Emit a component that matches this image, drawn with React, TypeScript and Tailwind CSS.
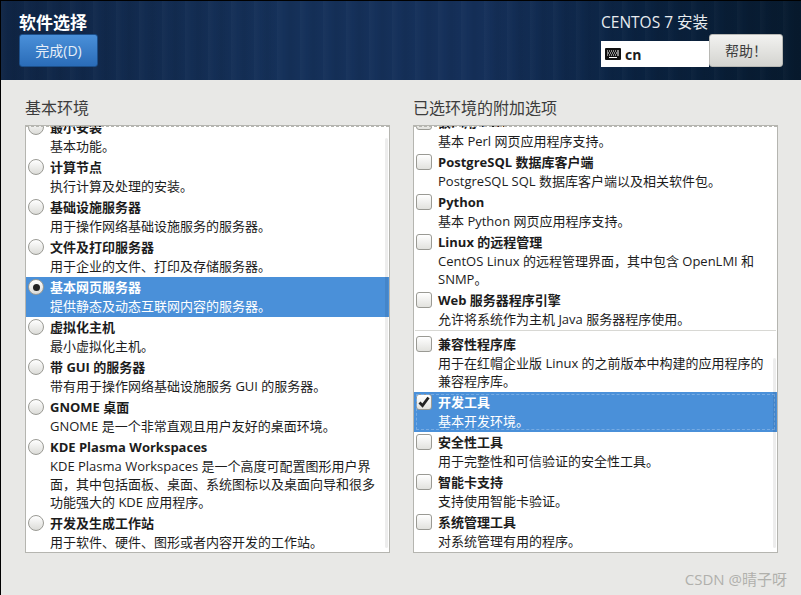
import { ReactNode } from "react";

interface Option {
  title: string;
  lines: string[];
  selected?: boolean;
}

const ENVIRONMENTS: Option[] = [
  { title: "最小安装", lines: ["基本功能。"] },
  { title: "计算节点", lines: ["执行计算及处理的安装。"] },
  { title: "基础设施服务器", lines: ["用于操作网络基础设施服务的服务器。"] },
  { title: "文件及打印服务器", lines: ["用于企业的文件、打印及存储服务器。"] },
  { title: "基本网页服务器", lines: ["提供静态及动态互联网内容的服务器。"], selected: true },
  { title: "虚拟化主机", lines: ["最小虚拟化主机。"] },
  { title: "带 GUI 的服务器", lines: ["带有用于操作网络基础设施服务 GUI 的服务器。"] },
  { title: "GNOME 桌面", lines: ["GNOME 是一个非常直观且用户友好的桌面环境。"] },
  {
    title: "KDE Plasma Workspaces",
    lines: [
      "KDE Plasma Workspaces 是一个高度可配置图形用户界",
      "面，其中包括面板、桌面、系统图标以及桌面向导和很多",
      "功能强大的 KDE 应用程序。",
    ],
  },
  { title: "开发及生成工作站", lines: ["用于软件、硬件、图形或者内容开发的工作站。"] },
];

const ADDONS_TOP: Option[] = [
  { title: "嵌入用 Perl", lines: ["基本 Perl 网页应用程序支持。"] },
  { title: "PostgreSQL 数据库客户端", lines: ["PostgreSQL SQL 数据库客户端以及相关软件包。"] },
  { title: "Python", lines: ["基本 Python 网页应用程序支持。"] },
  {
    title: "Linux 的远程管理",
    lines: ["CentOS Linux 的远程管理界面，其中包含 OpenLMI 和", "SNMP。"],
  },
  { title: "Web 服务器程序引擎", lines: ["允许将系统作为主机 Java 服务器程序使用。"] },
];

const ADDONS_BOTTOM: Option[] = [
  {
    title: "兼容性程序库",
    lines: ["用于在红帽企业版 Linux 的之前版本中构建的应用程序的", "兼容程序库。"],
  },
  { title: "开发工具", lines: ["基本开发环境。"], selected: true },
  { title: "安全性工具", lines: ["用于完整性和可信验证的安全性工具。"] },
  { title: "智能卡支持", lines: ["支持使用智能卡验证。"] },
  { title: "系统管理工具", lines: ["对系统管理有用的程序。"] },
];

function Radio({ checked }: { checked?: boolean }) {
  return (
    <span className="flex h-4 w-4 shrink-0 items-center justify-center rounded-full border border-[#9a9a94] bg-gradient-to-b from-[#ffffff] to-[#dcdcd8]">
      {checked ? <span className="h-[7px] w-[7px] rounded-full bg-[#222222]" /> : null}
    </span>
  );
}

function Checkbox({ checked }: { checked?: boolean }) {
  return (
    <span className="flex h-4 w-4 shrink-0 items-center justify-center rounded-[3px] border border-[#9a9a94] bg-gradient-to-b from-[#ffffff] to-[#e2e2de]">
      {checked ? (
        <svg viewBox="0 0 14 14" className="h-[14px] w-[14px]">
          <path d="M2.5 7.500 L5.500 10.500 L11.500 2.500" fill="none" stroke="#222222" strokeWidth="2.8" />
        </svg>
      ) : null}
    </span>
  );
}

function Row({ option, mark, focused }: { option: Option; mark: ReactNode; focused?: boolean }) {
  return (
    <div
      className={`relative flex pl-[2px] ${
        option.selected ? "bg-[#4a90d9] text-white" : "text-[#1c1c1c]"
      }`}
    >
      {focused ? (
        <div className="absolute inset-[2px] border border-dashed border-[#76abe3]" />
      ) : null}
      <div className="flex h-5 w-[22px] shrink-0 items-center">{mark}</div>
      <div className="relative min-w-0 pb-[2px]">
        <div className="h-5 whitespace-nowrap text-[13px] font-bold leading-5">{option.title}</div>
        {option.lines.map((line) => (
          <div key={line} className="h-[18px] whitespace-nowrap text-[13px] leading-[18px]">
            {line}
          </div>
        ))}
      </div>
    </div>
  );
}

function Panel({
  children,
  scrollTop,
  thumb,
}: {
  children: ReactNode;
  scrollTop: string;
  thumb: string;
}) {
  return (
    <div className="relative h-[428px] w-[365px] overflow-hidden border border-[#b5b5b0] bg-white">
      <div className={scrollTop}>{children}</div>
      <div className="absolute left-0 right-0 top-0 border-t border-dashed border-[#b5b5b0]" />
      <div className={`absolute bottom-1 right-[1px] w-[3px] rounded-full bg-black/[0.07] ${thumb}`} />
    </div>
  );
}

export default function App() {
  return (
    <div className="flex h-[595px] w-[801px] flex-col overflow-hidden border-l border-t border-black bg-[#e8e8e6] font-['Open_Sans','Noto_Sans_CJK_SC',sans-serif]">
      <header className="flex h-[79px] shrink-0 justify-between bg-[repeating-linear-gradient(90deg,rgba(255,255,255,0.025)_0px,rgba(255,255,255,0)_7px,rgba(0,0,0,0.05)_13px,rgba(255,255,255,0)_23px),linear-gradient(90deg,#0f2545_0%,#15315a_35%,#15305a_60%,#0a2240_80%,#071a2e_100%)] pl-[18px] pr-[18px] text-white">
        <div className="pt-[12px]">
          <h1 className="text-[17px] font-bold leading-5">软件选择</h1>
          <button className="mt-[1px] flex h-[33px] w-[79px] items-center justify-center rounded-[3px] border border-[#1c4f8a] bg-gradient-to-b from-[#4a90d9] to-[#2a6cb8] text-[14px] text-[#e6eef8]">
            完成(D)
          </button>
        </div>
        <div className="flex flex-col items-end pt-[11px]">
          <div className="w-[182px] text-[15.5px] leading-5 text-[#e8ecf0]">CENTOS 7 安装</div>
          <div className="mt-[2px] flex">
            <div className="mt-[7px] flex h-[26px] w-[108px] items-center gap-1 bg-white pl-1 text-[14px] font-bold text-[#1c1c1c]">
              <svg viewBox="0 0 16 12" className="h-3 w-4">
                <rect width="16" height="12" rx="1" fill="#111111" />
                <path
                  d="M2 3h1M4 3h1M6 3h1M8 3h1M10 3h1M12 3h2M2 5h2M5 5h1M7 5h1M9 5h1M11 5h3M2 7h1M4 7h1M6 7h1M8 7h1M10 7h1M12 7h2M4 9.500h8"
                  stroke="#ffffff"
                  strokeWidth="1"
                />
              </svg>
              <span>cn</span>
            </div>
            <button className="flex h-[33px] w-[74px] items-center justify-center rounded-[3px] border border-[#b8b8b4] bg-gradient-to-b from-[#f2f2f0] to-[#d4d4d0] text-[14px] text-[#3c3c3c]">
              帮助！
            </button>
          </div>
        </div>
      </header>

      <main className="flex gap-[23px] pl-6 pt-[18px]">
        <section>
          <h2 className="mb-[7px] h-5 text-[16px] leading-5 text-[#3c3c3c]">基本环境</h2>
          <Panel scrollTop="-mt-[9px]" thumb="top-3">
            {ENVIRONMENTS.map((option) => (
              <Row key={option.title} option={option} mark={<Radio checked={option.selected} />} />
            ))}
          </Panel>
        </section>
        <section>
          <h2 className="mb-[7px] h-5 text-[16px] leading-5 text-[#3c3c3c]">已选环境的附加选项</h2>
          <Panel scrollTop="-mt-[14px]" thumb="top-[232px]">
            {ADDONS_TOP.map((option) => (
              <Row key={option.title} option={option} mark={<Checkbox checked={option.selected} />} />
            ))}
            <div className="mx-[1px] mb-[3px] border-t border-[#d8d8d4]" />
            {ADDONS_BOTTOM.map((option) => (
              <Row
                key={option.title}
                option={option}
                focused={option.selected}
                mark={<Checkbox checked={option.selected} />}
              />
            ))}
          </Panel>
        </section>
      </main>

      <div className="mt-[18px] pr-[14px] text-right text-[15px] leading-4 text-[#b0b0ac]">CSDN @晴子呀</div>
    </div>
  );
}
